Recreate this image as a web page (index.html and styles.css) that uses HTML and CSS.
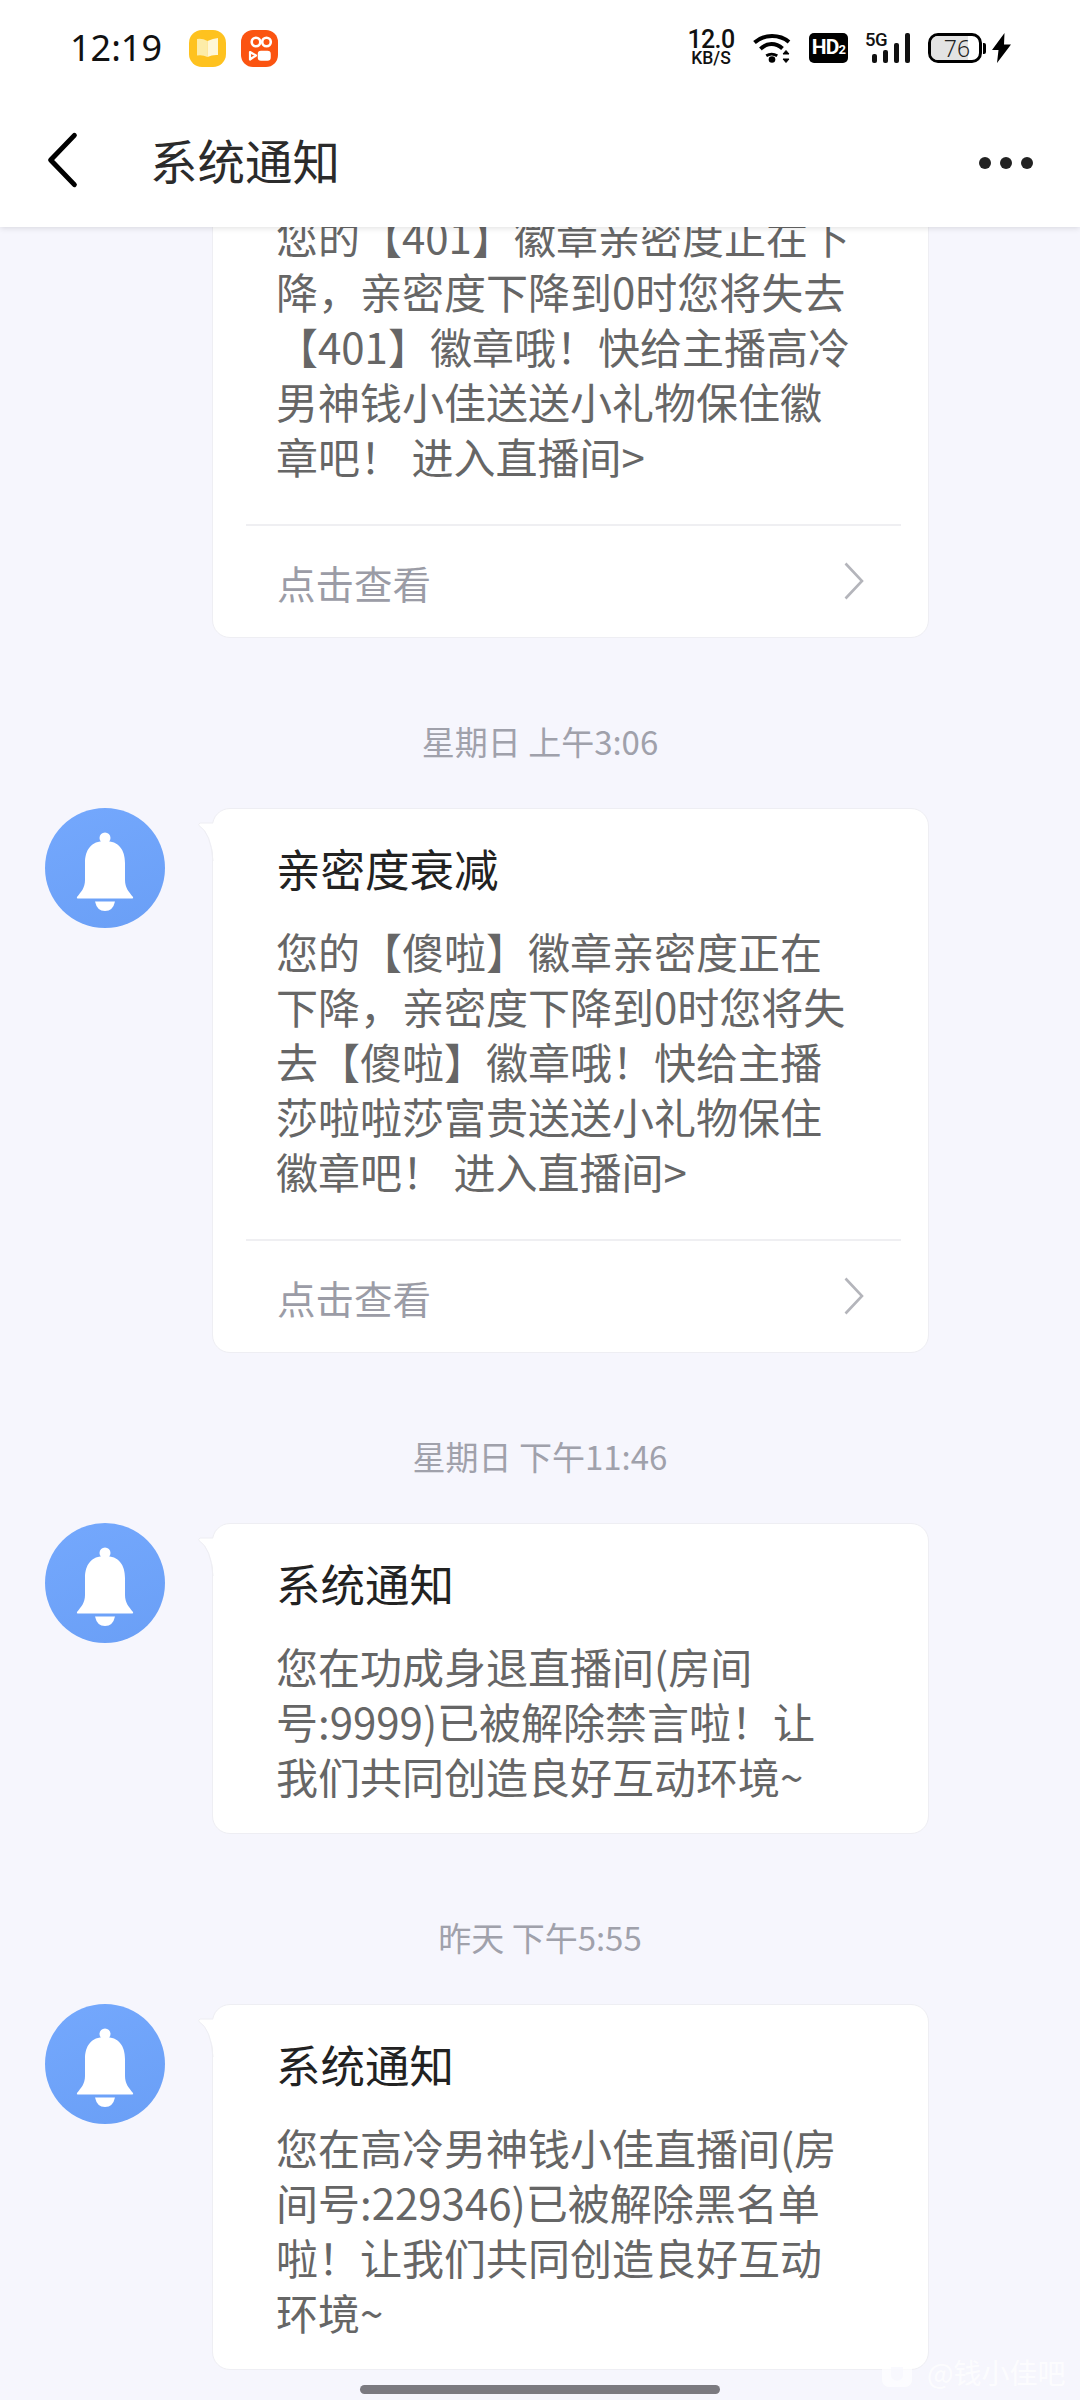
FILE: index.html
```html
<!DOCTYPE html>
<html lang="zh-CN">
<head>
<meta charset="utf-8">
<title>系统通知</title>
<link rel="stylesheet" href="styles.css">
</head>
<body>
<div class="screen">
  <header class="top">
    <div class="status">
      <div class="status-left">
        <span class="clock">12:19</span>
        <svg class="app-icon" viewBox="0 0 37 37"><rect width="37" height="37" rx="13" fill="#fec21f"/><path d="M8 9q5-1 10.500 2v16q-5-2.500-10.500-1.500z" fill="#fdeca8"/><path d="M29 8q-5 .5-10.500 3v16q5-2.500 10.500-2z" fill="#fff7d6"/></svg>
        <svg class="app-icon" viewBox="0 0 37 37"><rect width="37" height="37" rx="12" fill="#fb5411"/><g fill="none" stroke="#fff" stroke-width="2.600"><circle cx="15" cy="12" r="4.300"/><circle cx="25.500" cy="12" r="4.300"/><rect x="17.500" y="21.500" width="11.500" height="8.500" rx="2.500" fill="#fff" stroke-width="1.500"/><path d="M9 22l6 3.500-6 4z" stroke-linejoin="round" stroke-width="2.200"/></g></svg>
      </div>
      <div class="status-right">
        <div class="speed"><span class="speed-num">12.0</span><span class="speed-unit">KB/S</span></div>
        <svg class="wifi" viewBox="0 0 40 30"><g fill="none" stroke="#000" stroke-width="4"><path d="M1.500 9.500Q9 3 19 3t17 6"/><path d="M7.500 16Q12.500 11 18.500 11t11 4.500"/></g><path d="M12.500 21.500q6-3.500 12.500 0l-1.500 2.500q-5-3-9.500 0z" fill="#000"/><circle cx="19" cy="26.500" r="3.300" fill="#000"/><path d="M33 17.500l-3 3.500h6zM33 29.500l-3-3.500h6z" fill="#000" stroke="#000" stroke-width="1"/></svg>
        <div class="hd"><span>HD</span><span class="hd-two">2</span></div>
        <div class="signal">
          <span class="five-g">5G</span>
          <div class="bars"><i class="bar-1"></i><i class="bar-2"></i><i class="bar-3"></i><i class="bar-4"></i></div>
        </div>
        <div class="battery"><div class="battery-body"><div class="battery-fill"></div><span class="battery-num">76</span></div><div class="battery-tip"></div></div>
        <svg class="bolt" viewBox="0 0 19 30"><path d="M12.500 0L0 17h6.500L5 30 19 11.500h-7z" fill="#000"/></svg>
      </div>
    </div>
    <nav class="nav">
      <svg class="back" viewBox="0 0 34 60"><path d="M30 3L4 30l26 27" fill="none" stroke="#000" stroke-width="5.500" stroke-linecap="round" stroke-linejoin="round"/></svg>
      <h1 class="nav-title">系统通知</h1>
      <div class="more"><i></i><i></i><i></i></div>
    </nav>
  </header>

  <main class="feed">
    <div class="feed-inner">
      <article class="msg">
        <div class="avatar-slot"></div>
        <div class="card card-scrolled">
          <p class="card-text">您的【401】徽章亲密度正在下<br>降，亲密度下降到0时您将失去<br>【401】徽章哦！快给主播高冷<br>男神钱小佳送送小礼物保住徽<br>章吧！ 进入直播间&gt;</p>
          <div class="card-foot"><span>点击查看</span><svg class="chev" viewBox="0 0 20 38"><path d="M1.500 1.500L18 19 1.500 36.500" fill="none" stroke="#b4b5bb" stroke-width="2.600"/></svg></div>
        </div>
      </article>

      <time class="stamp">星期日 上午3:06</time>
      <article class="msg">
        <div class="avatar"><svg viewBox="0 0 120 120"><circle cx="60" cy="30" r="5.500" fill="#fff"/><path d="M60 33c-14 0-20 9-20 22v17c0 8-4 12-8 17q-.8 1.500 1 1.500h54q1.800 0 1-1.500c-4-5-8-9-8-17V55c0-13-6-22-20-22z" fill="#fff"/><path d="M50 93.500h20q-2 9.500-10 9.500t-10-9.500z" fill="#fff"/></svg></div>
        <div class="card">
          <svg class="tail" viewBox="0 0 16 56"><path d="M16 14H2q-2 1-1 2.500Q14 24 16 54z" fill="#fff"/><path d="M15 14H2q-2 1-1 2.500Q13 24 15 52" fill="none" stroke="#eeeef3"/></svg>
          <h2 class="card-title">亲密度衰减</h2>
          <p class="card-text">您的【傻啦】徽章亲密度正在<br>下降，亲密度下降到0时您将失<br>去【傻啦】徽章哦！快给主播<br>莎啦啦莎富贵送送小礼物保住<br>徽章吧！ 进入直播间&gt;</p>
          <div class="card-foot"><span>点击查看</span><svg class="chev" viewBox="0 0 20 38"><path d="M1.500 1.500L18 19 1.500 36.500" fill="none" stroke="#b4b5bb" stroke-width="2.600"/></svg></div>
        </div>
      </article>

      <time class="stamp">星期日 下午11:46</time>
      <article class="msg">
        <div class="avatar"><svg viewBox="0 0 120 120"><circle cx="60" cy="30" r="5.500" fill="#fff"/><path d="M60 33c-14 0-20 9-20 22v17c0 8-4 12-8 17q-.8 1.500 1 1.500h54q1.800 0 1-1.500c-4-5-8-9-8-17V55c0-13-6-22-20-22z" fill="#fff"/><path d="M50 93.500h20q-2 9.500-10 9.500t-10-9.500z" fill="#fff"/></svg></div>
        <div class="card card-plain">
          <svg class="tail" viewBox="0 0 16 56"><path d="M16 14H2q-2 1-1 2.500Q14 24 16 54z" fill="#fff"/><path d="M15 14H2q-2 1-1 2.500Q13 24 15 52" fill="none" stroke="#eeeef3"/></svg>
          <h2 class="card-title">系统通知</h2>
          <p class="card-text">您在功成身退直播间(房间<br>号:9999)已被解除禁言啦！让<br>我们共同创造良好互动环境~</p>
        </div>
      </article>

      <time class="stamp">昨天 下午5:55</time>
      <article class="msg">
        <div class="avatar"><svg viewBox="0 0 120 120"><circle cx="60" cy="30" r="5.500" fill="#fff"/><path d="M60 33c-14 0-20 9-20 22v17c0 8-4 12-8 17q-.8 1.500 1 1.500h54q1.800 0 1-1.500c-4-5-8-9-8-17V55c0-13-6-22-20-22z" fill="#fff"/><path d="M50 93.500h20q-2 9.500-10 9.500t-10-9.500z" fill="#fff"/></svg></div>
        <div class="card card-plain">
          <svg class="tail" viewBox="0 0 16 56"><path d="M16 14H2q-2 1-1 2.500Q14 24 16 54z" fill="#fff"/><path d="M15 14H2q-2 1-1 2.500Q13 24 15 52" fill="none" stroke="#eeeef3"/></svg>
          <h2 class="card-title">系统通知</h2>
          <p class="card-text">您在高冷男神钱小佳直播间(房<br>间号:229346)已被解除黑名单<br>啦！让我们共同创造良好互动<br>环境~</p>
        </div>
      </article>
    </div>
  </main>

  <div class="watermark">
    <svg class="wm-icon" viewBox="0 0 30 30"><rect width="30" height="30" rx="7" fill="#fff" fill-opacity=".7"/><path d="M9 10h12v9q-1 4-6 5-5-1-6-5z" fill="#f6f6fd" fill-opacity=".7"/></svg>
    <span>@钱小佳吧</span>
  </div>
  <div class="home-bar"></div>
</div>
</body>
</html>
```
FILE: styles.css
```css
* { box-sizing: border-box; }
html, body { margin: 0; padding: 0; }
body { font-family: "Noto Sans CJK SC", "Noto Sans", sans-serif; }
.screen {
  position: relative;
  width: 1080px;
  height: 2400px;
  overflow: hidden;
  background: #f6f6fd;
  display: flex;
  flex-direction: column;
}
.top {
  position: relative;
  z-index: 2;
  flex: none;
  height: 227px;
  background: #fff;
  box-shadow: 0 1px 6px rgba(0, 0, 0, .13);
}
.status {
  height: 96px;
  padding: 30px 69px 0 70px;
  display: flex;
  justify-content: space-between;
  align-items: flex-start;
}
.status-left { display: flex; align-items: flex-start; }
.clock {
  font-family: "Noto Sans", sans-serif;
  font-size: 36px;
  line-height: 36px;
  color: #111;
  width: 119px;
}
.app-icon { width: 37px; height: 37px; margin-right: 15px; display: block; }
.status-right { display: flex; align-items: flex-start; position: relative; }
.speed {
  width: 46px;
  display: flex;
  flex-direction: column;
  align-items: center;
  font-family: "Roboto", sans-serif;
  font-weight: 500;
  color: #111;
}
.speed-num { font-size: 25px; line-height: 20px; letter-spacing: -.6px; }
.speed-unit { font-size: 17.500px; line-height: 16px; }
.wifi { width: 40px; height: 30px; margin: 3px 0 0 19px; display: block; }
.hd {
  width: 39px;
  height: 30px;
  margin: 3px 0 0 16px;
  border-radius: 5px;
  background: #000;
  color: #fff;
  display: flex;
  align-items: baseline;
  justify-content: center;
  font-family: "Roboto", sans-serif;
  font-weight: 700;
  font-size: 21px;
  line-height: 29px;
  letter-spacing: -.8px;
}
.hd-two { font-size: 13px; }
.signal { position: relative; width: 45px; height: 30px; margin: 3px 0 0 17px; }
.five-g {
  position: absolute;
  left: 0;
  top: -2px;
  font-family: "Roboto", sans-serif;
  font-weight: 500;
  font-size: 18.500px;
  line-height: 18px;
  letter-spacing: -.4px;
  color: #111;
}
.bars { position: absolute; inset: 0; display: flex; align-items: flex-end; justify-content: flex-end; gap: 5.500px; }
.bars i { display: block; width: 5.500px; background: #111; border-radius: 2px; }
.bar-1 { height: 9px; }
.bar-2 { height: 13px; }
.bar-3 { height: 20px; }
.bar-4 { height: 30px; }
.battery { display: flex; align-items: center; margin: 3px 0 0 18px; height: 30px; }
.battery-body {
  position: relative;
  width: 54px;
  height: 30px;
  border: 3.500px solid #000;
  border-radius: 10px;
  overflow: hidden;
  display: flex;
  align-items: center;
  justify-content: center;
  padding-left: 4px;
  background: #fff;
}
.battery-fill { position: absolute; left: 0; top: 0; bottom: 0; width: 37px; background: #e3e3e3; }
.battery-num {
  position: relative;
  font-family: "Noto Sans", sans-serif;
  font-weight: 300;
  font-size: 23px;
  line-height: 22px;
  color: #222;
}
.battery-tip { width: 3px; height: 11px; margin-left: 1px; background: #000; border-radius: 0 2px 2px 0; }
.bolt { width: 19px; height: 30px; margin: 3px 0 0 6px; display: block; }
.nav {
  height: 131px;
  padding: 0 47px 0 47px;
  display: flex;
  align-items: center;
}
.back { width: 31px; height: 58px; display: block; margin-top: -4px; }
.nav-title {
  margin: -4px 0 0 72px;
  flex: 1;
  font-size: 47.500px;
  line-height: 60px;
  font-weight: 400;
  color: #2b2b2b;
}
.more { display: flex; gap: 9px; margin-top: 3px; }
.more i { display: block; width: 12px; height: 12px; border-radius: 50%; background: #222; }

.feed { flex: 1; min-height: 0; overflow: hidden; }
.feed-inner { margin-top: -134px; display: flex; flex-direction: column; }
.msg { display: flex; gap: 47px; padding-left: 45px; }
.avatar-slot { width: 120px; height: 120px; flex: none; }
.avatar {
  width: 120px;
  height: 120px;
  flex: none;
  border-radius: 50%;
  background: linear-gradient(160deg, #74a8fd, #6a9ff6);
}
.avatar svg { width: 120px; height: 120px; display: block; }
.card {
  position: relative;
  width: 717px;
  flex: none;
  padding-top: 29px;
  background: #fff;
  border: 1px solid #eeeef3;
  border-radius: 18px;
}
.card-scrolled { padding-top: 114px; }
.tail { position: absolute; left: -15px; top: 0; width: 16px; height: 56px; display: block; }
.card-title {
  margin: 0 0 25px 63px;
  font-size: 44.500px;
  line-height: 60px;
  font-weight: 400;
  color: #222;
}
.card-text {
  margin: 0 0 30px 63px;
  font-size: 42px;
  line-height: 55px;
  white-space: nowrap;
  color: #666;
}
.card-foot {
  margin: 41px 27px 0 33px;
  height: 113px;
  padding: 0 37px 0 31px;
  border-top: 2px solid #efeff2;
  display: flex;
  align-items: center;
  justify-content: space-between;
  font-size: 38.500px;
  color: #9b9ca6;
}
.chev { width: 20px; height: 38px; display: block; margin-top: -2px; }
.card:not(.card-plain) .card-text { margin-bottom: 0; }
.stamp {
  display: block;
  margin: 81px 0 45px;
  height: 44px;
  line-height: 44px;
  text-align: center;
  font-size: 33px;
  color: #a0a1ab;
}
.watermark {
  position: absolute;
  left: 882px;
  top: 2357px;
  display: flex;
  align-items: center;
  gap: 15px;
  font-size: 28px;
  line-height: 30px;
  color: rgba(255, 255, 255, .75);
}
.wm-icon { width: 30px; height: 30px; display: block; flex: none; }
.home-bar {
  position: absolute;
  left: 360px;
  top: 2385px;
  width: 360px;
  height: 9px;
  border-radius: 5px;
  background: #7b7a80;
}
```
